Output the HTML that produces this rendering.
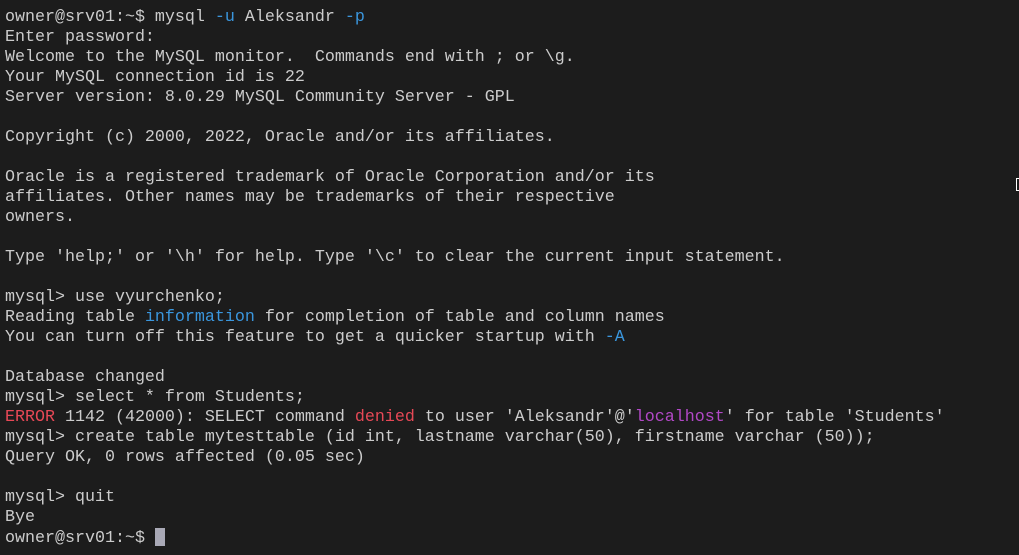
<!DOCTYPE html>
<html><head><meta charset="utf-8"><style>
html,body{margin:0;padding:0;background:#1c1c1c;width:1019px;height:555px;overflow:hidden}
pre{margin:0;position:absolute;left:5px;top:8px;font-family:"Liberation Mono",monospace;font-size:16.67px;line-height:20px;color:#cccccc;white-space:pre}
.b{color:#3a96dd}.r{color:#e74856}.m{color:#b148c6}
.cur{display:inline-block;width:10px;height:18px;background:#a9a9b6;vertical-align:-4px}
.mk{position:absolute;left:1016px;top:178px;width:3px;height:13px;border-left:1px solid #fff;border-top:1px solid #fff;border-bottom:1px solid #fff;box-sizing:border-box}
</style></head><body>
<pre>owner@srv01:~$ mysql <span class="b">-u</span> Aleksandr <span class="b">-p</span>
Enter password:
Welcome to the MySQL monitor.  Commands end with ; or \g.
Your MySQL connection id is 22
Server version: 8.0.29 MySQL Community Server - GPL

Copyright (c) 2000, 2022, Oracle and/or its affiliates.

Oracle is a registered trademark of Oracle Corporation and/or its
affiliates. Other names may be trademarks of their respective
owners.

Type 'help;' or '\h' for help. Type '\c' to clear the current input statement.

mysql&gt; use vyurchenko;
Reading table <span class="b">information</span> for completion of table and column names
You can turn off this feature to get a quicker startup with <span class="b">-A</span>

Database changed
mysql&gt; select * from Students;
<span class="r">ERROR</span> 1142 (42000): SELECT command <span class="r">denied</span> to user 'Aleksandr'@'<span class="m">localhost</span>' for table 'Students'
mysql&gt; create table mytesttable (id int, lastname varchar(50), firstname varchar (50));
Query OK, 0 rows affected (0.05 sec)

mysql&gt; quit
Bye
owner@srv01:~$ <span class="cur"></span></pre>
<div class="mk"></div>
</body></html>
